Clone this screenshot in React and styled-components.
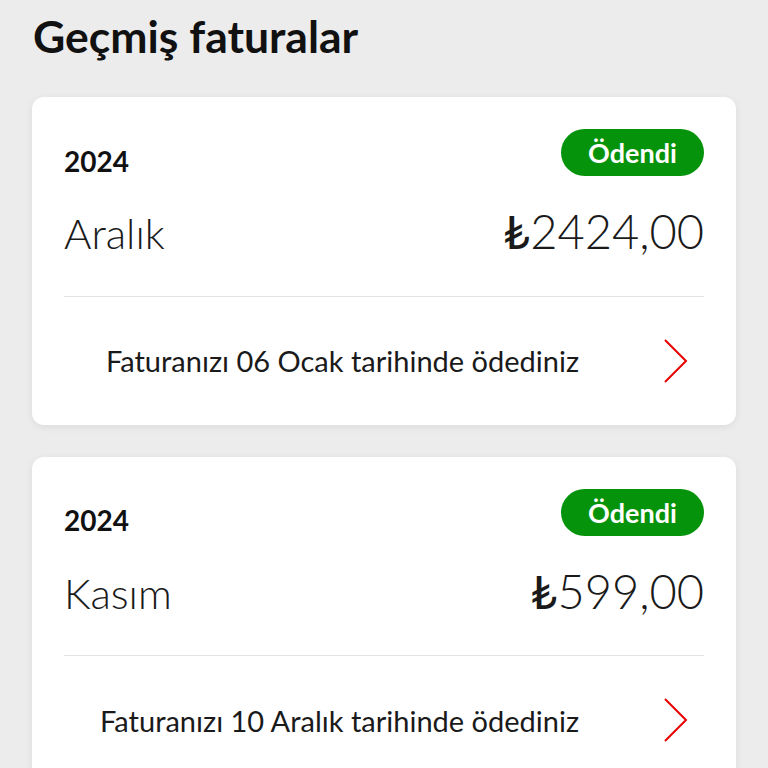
import React from 'react';
import styled, { createGlobalStyle } from 'styled-components';

const GlobalStyle = createGlobalStyle`
  body {
    margin: 0;
    background: #ececec;
    font-family: Lato, "Noto Sans", sans-serif;
    color: #1a1a1a;
  }
`;

const bills = [
  { year: '2024', month: 'Aralık', amount: '2424,00', paidOn: '06 Ocak' },
  { year: '2024', month: 'Kasım', amount: '599,00', paidOn: '10 Aralık' },
];

const Chevron = () => (
  <svg width="26" height="46" viewBox="0 0 26 46" fill="none">
    <path d="M2 2 L23 23 L2 44" stroke="#e60000" strokeWidth="2" strokeLinejoin="miter" />
  </svg>
);

const App = () => {
  return (
    <Page>
      <GlobalStyle />
      <Title>Geçmiş faturalar</Title>
      <List>
        {bills.map((b, i) => (
          <Card key={i}>
            <Header>
              <Year>{b.year}</Year>
              <Badge>Ödendi</Badge>
            </Header>
            <AmountRow>
              <Month>{b.month}</Month>
              <Amount>
                <Lira>₺</Lira>
                {b.amount}
              </Amount>
            </AmountRow>
            <Divider />
            <Footer>
              <FooterText>Faturanızı {b.paidOn} tarihinde ödediniz</FooterText>
              <Chevron />
            </Footer>
          </Card>
        ))}
      </List>
    </Page>
  );
};

export default App;

const Page = styled.div`
  padding: 9px 32px 32px;
`;

const Title = styled.h1`
  margin: 0 0 35px 1px;
  font-size: 44.5px;
  line-height: 1.2;
  font-weight: 700;
  color: #111;
`;

const List = styled.div`
  display: flex;
  flex-direction: column;
  gap: 32px;
`;

const Card = styled.div`
  background: #fff;
  border-radius: 12px;
  box-shadow: 0 2px 8px rgba(0, 0, 0, 0.07);
  padding: 32px 32px 0;
`;

const Header = styled.div`
  display: flex;
  justify-content: space-between;
  align-items: flex-end;
`;

const Year = styled.div`
  font-size: 28px;
  line-height: 1.2;
  font-weight: 700;
  color: #111;
  margin-bottom: -2px;
`;

const Badge = styled.div`
  display: flex;
  align-items: center;
  justify-content: center;
  width: 143px;
  height: 47px;
  border-radius: 24px;
  background: #05930b;
  color: #fff;
  font-size: 27px;
  font-weight: 700;
`;

const AmountRow = styled.div`
  display: flex;
  justify-content: space-between;
  align-items: baseline;
  margin-top: 27px;
`;

const Month = styled.div`
  font-size: 42px;
  line-height: 1.2;
  font-weight: 300;
  color: #1a1a1a;
`;

const Amount = styled.div`
  font-size: 47px;
  line-height: 1.2;
  font-weight: 300;
  color: #1a1a1a;
`;

const Lira = styled.span`
  font-weight: 400;
`;

const Divider = styled.div`
  height: 1px;
  background: #e2e2e2;
  margin-top: 36px;
`;

const Footer = styled.div`
  display: flex;
  align-items: center;
  justify-content: flex-end;
  gap: 84px;
  height: 128px;
  padding-right: 15px;
`;

const FooterText = styled.div`
  font-size: 29px;
  color: #1a1a1a;
`;
